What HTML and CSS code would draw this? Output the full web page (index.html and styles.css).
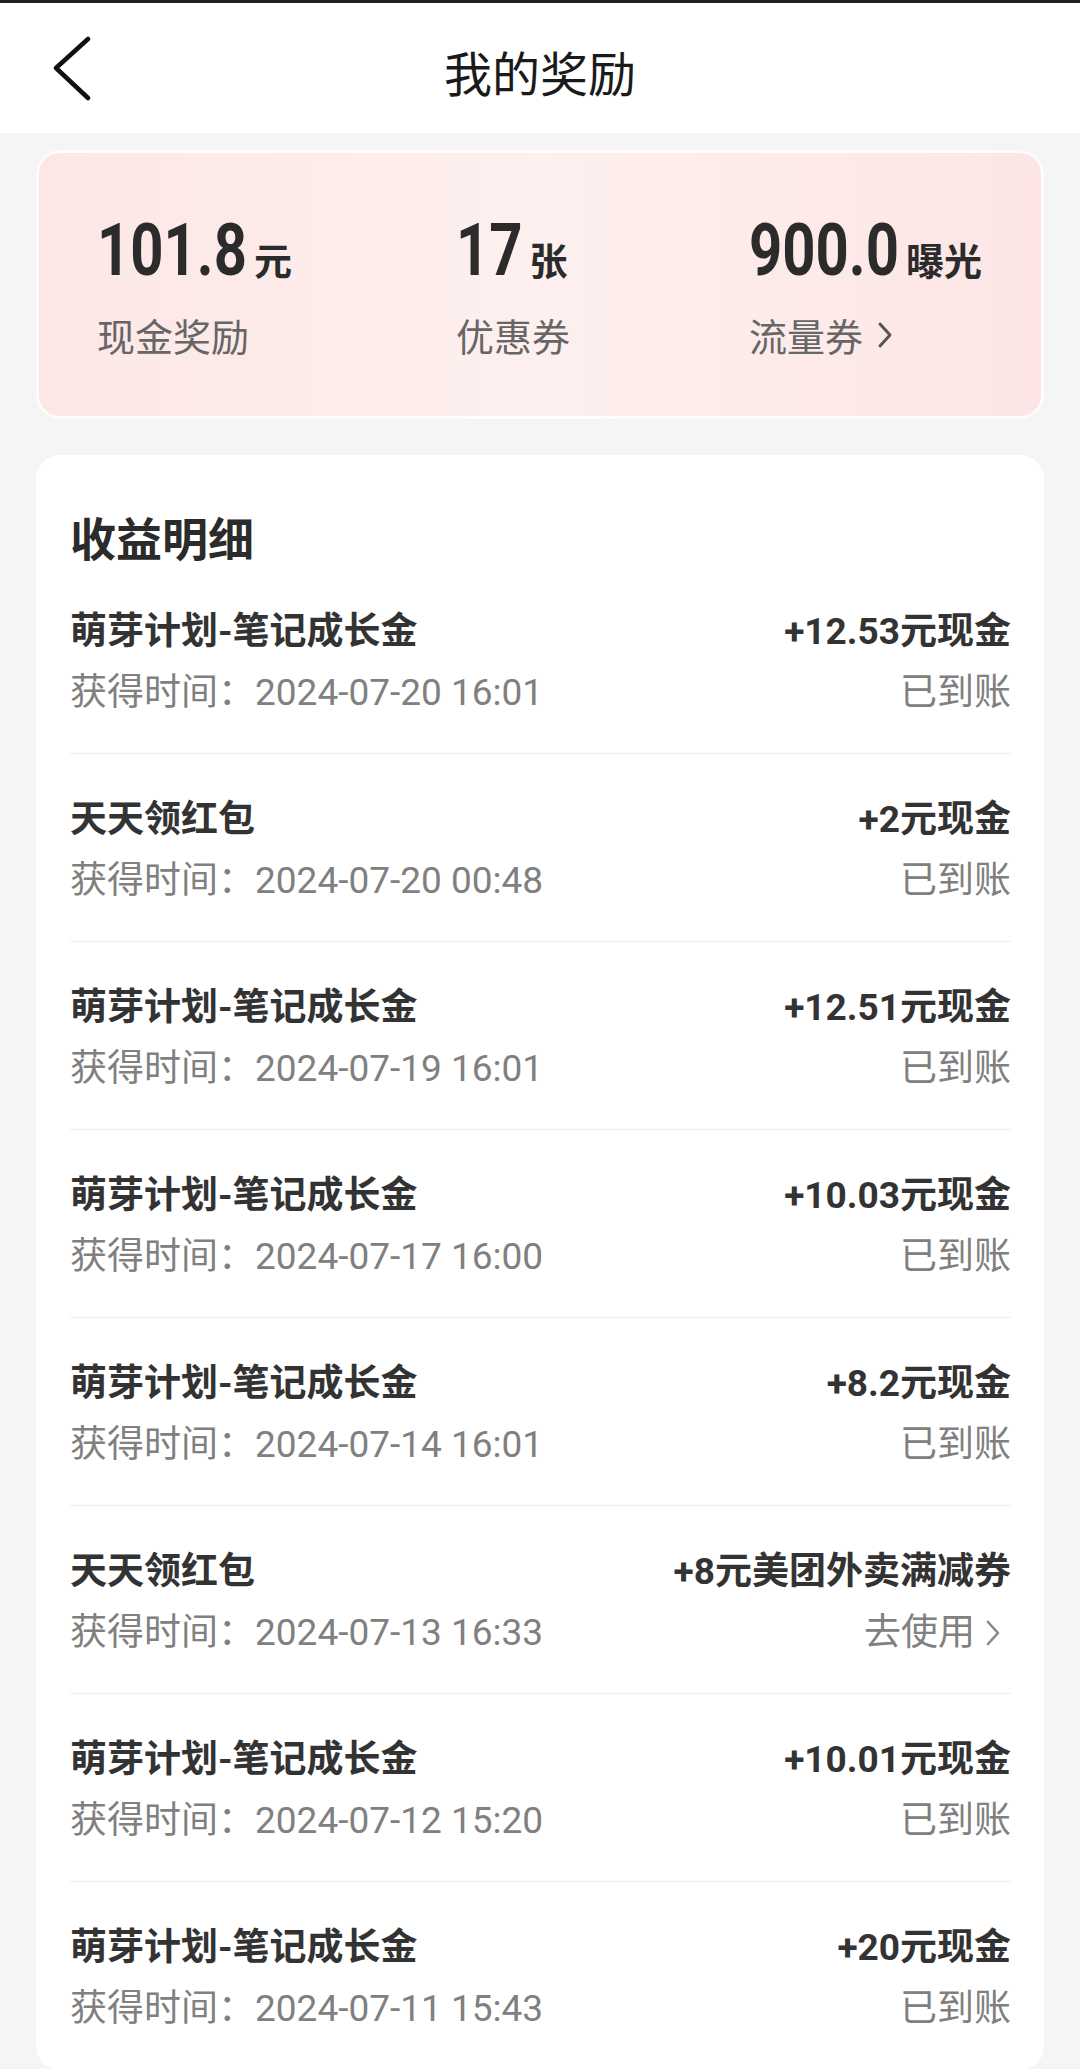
FILE: index.html
```html
<!DOCTYPE html>
<html lang="zh-CN">
<head>
  <meta charset="UTF-8">
  <meta name="viewport" content="width=device-width, initial-scale=1.0">
  <title>我的奖励</title>
  <link rel="stylesheet" href="styles.css">
</head>
<body>
  <header class="topbar">
    <a class="back" href="#">
      <svg width="40" height="66" viewBox="0 0 40 66"><path d="M36 3 L4 32 L36 62" fill="none" stroke="#111" stroke-width="4.5" stroke-linecap="round" stroke-linejoin="round"/></svg>
    </a>
    <h1>我的奖励</h1>
    <span></span>
  </header>

  <section class="summary">
    <div class="stat">
      <div class="num"><span class="digits">101.8</span><span class="unit">元</span></div>
      <div class="label">现金奖励</div>
    </div>
    <div class="stat">
      <div class="num"><span class="digits">17</span><span class="unit">张</span></div>
      <div class="label">优惠券</div>
    </div>
    <div class="stat">
      <div class="num"><span class="digits">900.0</span><span class="unit">曝光</span></div>
      <div class="label">流量券
        <svg class="chev" width="16" height="28" viewBox="0 0 16 28"><path d="M3 3 L13 14 L3 25" fill="none" stroke="#555" stroke-width="3" stroke-linecap="round" stroke-linejoin="round"/></svg>
      </div>
    </div>
  </section>

  <section class="list">
    <h2>收益明细</h2>

    <div class="row">
      <div class="line main"><span>萌芽计划-笔记成长金</span><span>+12.53元现金</span></div>
      <div class="line sub"><span>获得时间：2024-07-20 16:01</span><span>已到账</span></div>
    </div>
    <div class="row">
      <div class="line main"><span>天天领红包</span><span>+2元现金</span></div>
      <div class="line sub"><span>获得时间：2024-07-20 00:48</span><span>已到账</span></div>
    </div>
    <div class="row">
      <div class="line main"><span>萌芽计划-笔记成长金</span><span>+12.51元现金</span></div>
      <div class="line sub"><span>获得时间：2024-07-19 16:01</span><span>已到账</span></div>
    </div>
    <div class="row">
      <div class="line main"><span>萌芽计划-笔记成长金</span><span>+10.03元现金</span></div>
      <div class="line sub"><span>获得时间：2024-07-17 16:00</span><span>已到账</span></div>
    </div>
    <div class="row">
      <div class="line main"><span>萌芽计划-笔记成长金</span><span>+8.2元现金</span></div>
      <div class="line sub"><span>获得时间：2024-07-14 16:01</span><span>已到账</span></div>
    </div>
    <div class="row">
      <div class="line main"><span>天天领红包</span><span>+8元美团外卖满减券</span></div>
      <div class="line sub"><span>获得时间：2024-07-13 16:33</span>
        <span class="use">去使用<svg width="16" height="26" viewBox="0 0 16 26"><path d="M3 2 L13 13 L3 24" fill="none" stroke="#888" stroke-width="2.6" stroke-linecap="round" stroke-linejoin="round"/></svg></span>
      </div>
    </div>
    <div class="row">
      <div class="line main"><span>萌芽计划-笔记成长金</span><span>+10.01元现金</span></div>
      <div class="line sub"><span>获得时间：2024-07-12 15:20</span><span>已到账</span></div>
    </div>
    <div class="row">
      <div class="line main"><span>萌芽计划-笔记成长金</span><span>+20元现金</span></div>
      <div class="line sub"><span>获得时间：2024-07-11 15:43</span><span>已到账</span></div>
    </div>
  </section>
</body>
</html>
```

FILE: styles.css
```css
body {
  margin: 0;
  background-color: #f5f5f5;
  font-family: Roboto, "Noto Sans CJK SC", sans-serif;
  color: #333;
}
.topbar {
  display: grid;
  grid-template-columns: 1fr auto 1fr;
  align-items: center;
  height: 130px;
  background: #fff;
  border-top: 3px solid #222;
}
.back {
  display: flex;
  padding-left: 52px;
  padding-top: 2px;
}
.topbar h1 {
  margin: 0;
  font-family: "Noto Sans CJK SC", sans-serif;
  font-size: 48px;
  font-weight: 400;
  color: #1a1a1a;
  padding-top: 6px;
}

/* 顶部汇总卡片 */
.summary {
  display: grid;
  grid-template-columns: 359px 293px 1fr;
  margin: 17px 36px 0;
  height: 263px;
  box-sizing: content-box;
  padding: 0 0 0 58px;
  border: 3px solid rgba(255, 255, 255, 0.85);
  border-radius: 24px;
  background: linear-gradient(90deg, #fce7e6 0%, #fdf0ee 50%, #fde5e5 100%);
}
.stat {
  padding-top: 62px;
}
.num {
  font-size: 58px;
  line-height: 80px;
  color: #2b2b2b;
  white-space: nowrap;
}
.digits {
  display: inline-block;
  font-weight: 700;
  transform: scaleY(1.26);
  transform-origin: 0 60px;
}
.unit {
  font-family: "Noto Sans CJK SC", sans-serif;
  font-size: 38px;
  font-weight: 700;
  margin-left: 7px;
}
.label {
  display: flex;
  align-items: center;
  margin-top: 12px;
  font-family: "Noto Sans CJK SC", sans-serif;
  font-size: 38px;
  line-height: 48px;
  color: #666;
}
.chev {
  margin-left: 14px;
}

/* 收益明细列表 */
.list {
  margin: 36px 36px 0;
  padding: 51px 33px 0 34px;
  background: #fff;
  border-radius: 24px;
}
.list h2 {
  margin: 0;
  font-family: "Noto Sans CJK SC", sans-serif;
  font-size: 46px;
  font-weight: 700;
  line-height: 60px;
  color: #2b2b2b;
}
.row {
  padding: 42px 0 36px;
  border-bottom: 1px solid #eeeeee;
}
.line {
  display: flex;
  justify-content: space-between;
  align-items: center;
  font-size: 37px;
  line-height: 48px;
}
.main {
  font-weight: 700;
  color: #333;
}
.sub {
  margin-top: 13px;
  color: #808080;
}
.use {
  display: flex;
  align-items: center;
}
.use svg {
  margin-left: 10px;
  margin-right: 10px;
}
```
